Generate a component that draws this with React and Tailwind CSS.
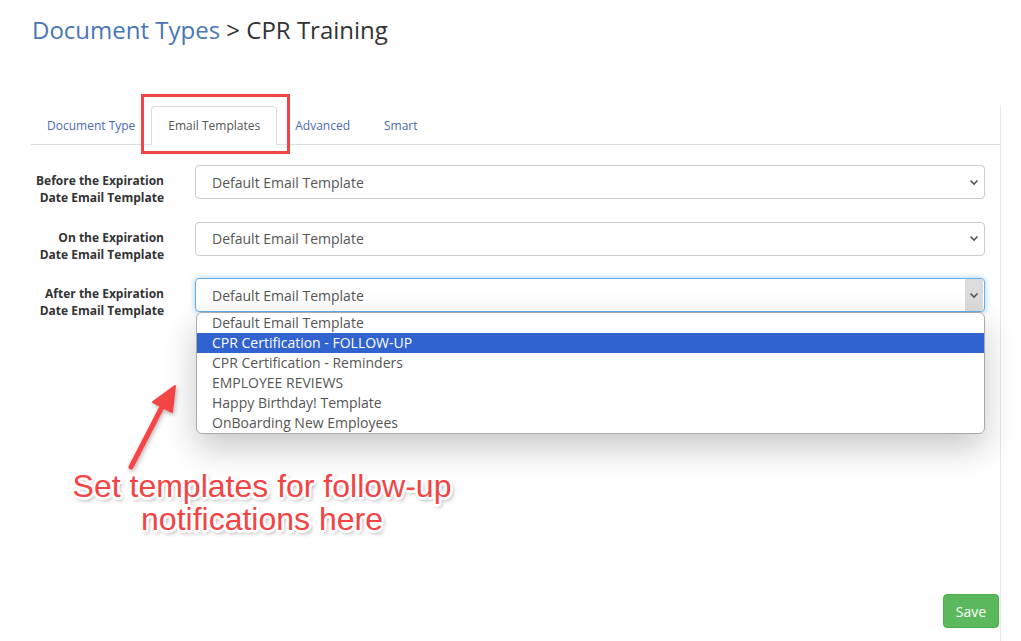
import React from "react";

const Chevron = () => (
  <svg width="10" height="7" viewBox="0 0 10 7" className="text-[#555]">
    <path d="M1.5 1.5 L5 5 L8.5 1.5" fill="none" stroke="currentColor" strokeWidth="1.6" />
  </svg>
);

function SelectBox({ focused }) {
  return (
    <div
      className={
        "relative flex h-[34px] items-center rounded-[4px] border bg-white pl-[16px] text-[14px] text-[#555] " +
        (focused
          ? "border-[#66afe9] shadow-[0_0_6px_rgba(102,175,233,0.6)]"
          : "border-[#ccc]")
      }
    >
      <span className="flex-1">Default Email Template</span>
      <div
        className={
          "flex h-full w-[18px] items-center justify-center " +
          (focused ? "bg-[#dcdcdc]" : "")
        }
      >
        <Chevron />
      </div>
      <div className="w-[1px]" />
    </div>
  );
}

function Row({ l1, l2, focused, children }) {
  return (
    <div className="flex h-[56.5px] items-start">
      <div className="w-[133px] pt-[7px] text-right text-[12px] font-bold leading-[17px] text-[#333]">
        <div>{l1}</div>
        <div>{l2}</div>
      </div>
      <div className="relative ml-[31px] w-[790px]">
        <SelectBox focused={focused} />
        {children}
      </div>
    </div>
  );
}

export default function App() {
  const items = [
    "Default Email Template",
    "CPR Certification - FOLLOW-UP",
    "CPR Certification - Reminders",
    "EMPLOYEE REVIEWS",
    "Happy Birthday! Template",
    "OnBoarding New Employees",
  ];
  return (
    <div
      className="relative h-[641px] w-[1021px] overflow-hidden bg-white"
      style={{ fontFamily: '"Open Sans", sans-serif' }}
    >
      <div className="pl-[32px] pt-[13px] text-[24px] leading-[33px]">
        <span className="text-[#4a76b8]">Document Types</span>
        <span className="text-[#333]"> &gt; CPR Training</span>
      </div>

      <div className="ml-[31px] mt-[59px] w-[970px] border-r border-[#e8e8e8] pb-[13px] h-[536px] flex flex-col">
        <div className="flex h-[40px] items-end border-b border-[#ddd] pt-[1px]">
          <div className="flex h-[38px] items-center px-[16px] pt-[1px] text-[12px] text-[#4a69b3]">
            Document Type
          </div>
          <div className="-mb-[1px] flex h-[39px] items-center rounded-t-[4px] border border-b-white border-[#ddd] bg-white px-[16px] text-[12px] text-[#555]">
            Email Templates
          </div>
          <div className="flex h-[38px] items-center px-[18px] pt-[1px] text-[12px] text-[#4a69b3]">
            Advanced
          </div>
          <div className="flex h-[38px] items-center px-[16px] pt-[1px] text-[12px] text-[#4a69b3]">
            Smart
          </div>
        </div>

        <div className="flex flex-col pt-[20px]">
          <Row l1="Before the Expiration" l2="Date Email Template" />
          <Row l1="On the Expiration" l2="Date Email Template" />
          <Row l1="After the Expiration" l2="Date Email Template" focused>
            <div className="absolute left-[1px] right-0 top-[34px] z-10 rounded-[6px] border border-[#aaa] bg-white py-0 shadow-[0_14px_34px_rgba(0,0,0,0.22)]">
              {items.map((t, i) => (
                <div
                  key={t}
                  className={
                    "h-[20px] pl-[15px] text-[14px] leading-[20px] " +
                    (i === 1 ? "bg-[#3163d0] text-white" : "text-[#555]")
                  }
                >
                  {t}
                </div>
              ))}
            </div>
          </Row>
        </div>

        <div className="mt-auto flex justify-end">
          <button className="mr-[1px] h-[34px] w-[56px] rounded-[4px] border border-[#4cae4c] bg-[#5cb85c] text-[14px] text-white">
            Save
          </button>
        </div>
      </div>

      {/* annotation: red box around tab */}
      <div className="pointer-events-none absolute left-[141px] top-[94px] h-[60px] w-[149px] border-[3px] border-[#f24444]" />

      {/* annotation arrow */}
      <svg
        className="pointer-events-none absolute left-0 top-0"
        width="1021"
        height="641"
        viewBox="0 0 1021 641"
      >
        <defs>
          <filter id="sh" x="-20%" y="-20%" width="140%" height="140%">
            <feDropShadow dx="1" dy="2" stdDeviation="2" floodColor="#000" floodOpacity="0.3" />
          </filter>
        </defs>
        <g filter="url(#sh)">
          <line x1="131" y1="467" x2="163" y2="405" stroke="#f54447" strokeWidth="5" strokeLinecap="round" />
          <polygon points="175,386 172,412 153,402" fill="#f54447" stroke="#f54447" strokeWidth="2" strokeLinejoin="round" />
        </g>
      </svg>

      {/* annotation text */}
      <div
        className="pointer-events-none absolute left-[22px] top-[470px] w-[480px] text-center text-[32px] leading-[33px] text-[#f24444]"
        style={{
          fontFamily: '"Liberation Sans", Arial, sans-serif',
          textShadow:
            "2.5px 0 0 #fff, -2.5px 0 0 #fff, 0 2.5px 0 #fff, 0 -2.5px 0 #fff, 2px 2px 0 #fff, -2px -2px 0 #fff, 2px -2px 0 #fff, -2px 2px 0 #fff, 2px 3px 4px rgba(0,0,0,0.5)",
        }}
      >
        <div>Set templates for follow-up</div>
        <div>notifications here</div>
      </div>
    </div>
  );
}
